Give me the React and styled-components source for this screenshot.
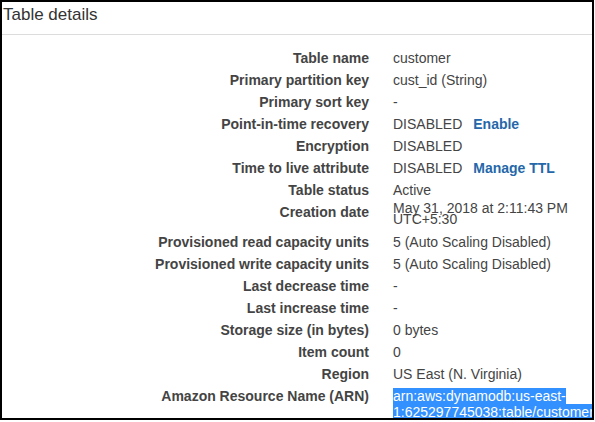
import styled, { createGlobalStyle } from "styled-components";

const GlobalStyle = createGlobalStyle`
    html, body {
        margin: 0;
        padding: 0;
        background: #fff;
    }
    body {
        font-family: "Liberation Sans", Arial, sans-serif;
    }
`;

const Panel = styled.section`
    box-sizing: border-box;
    width: 594px;
    height: 420px;
    border: 2px solid #000;
    overflow: hidden;
    background: #fff;
`;

const Header = styled.header`
    padding: 3px 1px 9px;
    border-bottom: 1px solid #dcdcdc;
    & h2 {
        margin: 0;
        font-size: 17px;
        line-height: 20px;
        font-weight: normal;
        color: #333;
    }
`;

const Details = styled.div`
    padding-top: 12px;
    display: flex;
    flex-direction: column;
`;

const Row = styled.div`
    display: grid;
    grid-template-columns: 367px 1fr;
    column-gap: 24px;
    align-items: start;
    font-size: 14px;
    color: #444;
`;

const Label = styled.div`
    text-align: right;
    font-weight: bold;
    line-height: 16px;
    padding: 3px 0;
    white-space: nowrap;
`;

const Value = styled.div`
    line-height: ${(p) => (p.$tight ? "11px" : "16px")};
    padding: ${(p) => (p.$tight ? "2px 0 6px" : "3px 0")};
    min-width: 0;
`;

const Action = styled.a`
    margin-left: 11px;
    font-weight: bold;
    color: #2567a9;
    text-decoration: none;
    cursor: pointer;
`;

const Selected = styled.span`
    background: #3390ff;
    color: #fff;
`;

const rows = [
    { label: "Table name", value: "customer" },
    { label: "Primary partition key", value: "cust_id (String)" },
    { label: "Primary sort key", value: "-" },
    { label: "Point-in-time recovery", value: "DISABLED", action: "Enable" },
    { label: "Encryption", value: "DISABLED" },
    { label: "Time to live attribute", value: "DISABLED", action: "Manage TTL" },
    { label: "Table status", value: "Active" },
    { label: "Creation date", value: "May 31, 2018 at 2:11:43 PM UTC+5:30", tight: true },
    { label: "Provisioned read capacity units", value: "5 (Auto Scaling Disabled)" },
    { label: "Provisioned write capacity units", value: "5 (Auto Scaling Disabled)" },
    { label: "Last decrease time", value: "-" },
    { label: "Last increase time", value: "-" },
    { label: "Storage size (in bytes)", value: "0 bytes" },
    { label: "Item count", value: "0" },
    { label: "Region", value: "US East (N. Virginia)" },
    {
        label: "Amazon Resource Name (ARN)",
        value: "arn:aws:dynamodb:us-east-1:625297745038:table/customer",
        selected: true,
    },
];

const App = () => {
    return (
        <>
            <GlobalStyle />
            <Panel>
                <Header>
                    <h2>Table details</h2>
                </Header>
                <Details>
                    {rows.map((row) => (
                        <Row key={row.label}>
                            <Label>{row.label}</Label>
                            <Value $tight={row.tight}>
                                {row.selected ? (
                                    <Selected>{row.value}</Selected>
                                ) : (
                                    row.value
                                )}
                                {row.action && <Action>{row.action}</Action>}
                            </Value>
                        </Row>
                    ))}
                </Details>
            </Panel>
        </>
    );
};

export default App;
